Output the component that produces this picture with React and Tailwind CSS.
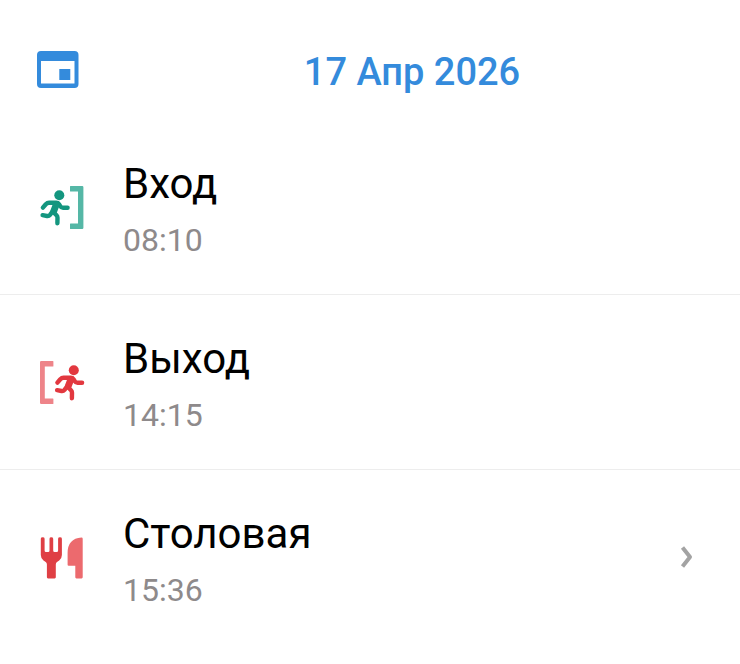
const Runner = ({ className }) => (
  <g className={className} fill="none" stroke="currentColor" strokeWidth="4.4" strokeLinecap="round" strokeLinejoin="round">
    <circle cx="21.3" cy="12.2" r="5" fill="currentColor" stroke="none" />
    <path d="M4.9 24.6 7.8 21.2Q9.2 19.8 11 19.8H18.3Q20.1 19.8 21 21.2L22.2 23.2Q23.2 24.8 25 24.8H29.6" />
    <path d="M18 22.2 15.8 28" strokeWidth="6.8" />
    <path d="M15.3 29 18.5 32.2Q19.5 33.2 19.5 34.8L19.4 40.2" />
    <path d="M14.5 28.5 12 31.8Q10.8 33.3 9 33L4.6 32.2" />
  </g>
);

const EnterIcon = () => (
  <svg viewBox="0 0 48 48" className="size-12 shrink-0" aria-hidden="true">
    <path className="fill-[#55b7a6]" d="M32.5 3H44.2Q45.4 3 45.4 4.2V44.8Q45.4 46 44.2 46H32.5Q32 46 32 45.5V41.1Q32 40.6 32.5 40.6H40V8.4H32.5Q32 8.4 32 7.9V3.5Q32 3 32.5 3Z" />
    <Runner className="text-[#14967f]" />
  </svg>
);

const ExitIcon = () => (
  <svg viewBox="0 0 48 48" className="size-12 shrink-0" aria-hidden="true">
    <path className="fill-[#ee8489]" d="M14.9 3H3.2Q2 3 2 4.2V44.8Q2 46 3.2 46H14.9Q15.4 46 15.4 45.5V41.1Q15.4 40.6 14.9 40.6H6.8V8.4H14.9Q15.4 8.4 15.4 7.9V3.5Q15.4 3 14.9 3Z" />
    <g transform="translate(14.5 0)">
      <Runner className="text-[#e2383f]" />
    </g>
  </svg>
);

const FoodIcon = () => (
  <svg viewBox="0 0 48 48" className="size-12 shrink-0" aria-hidden="true">
    <path className="fill-[#df3f44]" d="M2.8 5.7Q2.8 4.3 4.7 4.3T6.6 5.7V17.5Q6.6 19 8 19H10.1Q11.5 19 11.5 17.5V5.7Q11.5 4.3 13.3 4.3T15.2 5.7V17.5Q15.2 19 16.6 19H18.7Q20.1 19 20.1 17.5V5.7Q20.1 4.3 22 4.3T23.9 5.7V22Q23.9 25.5 21.2 27.4L19 29Q17.8 29.9 17.8 31.4V44.3Q17.8 45.4 16.7 45.4H10Q8.9 45.4 8.9 44.3V31.4Q8.9 29.9 7.7 29L5.5 27.4Q2.8 25.5 2.8 22Z" />
    <path className="fill-[#ec6a6e]" d="M43.5 4.5Q44.7 4.5 44.7 5.7V44.3Q44.7 45.4 43.6 45.4H38.4Q37.3 45.4 37.3 44.3V32.7H30.6Q29.6 32.7 29.6 31.7V20Q29.6 5.5 43.5 4.5Z" />
  </svg>
);

const events = [
  { title: "Вход", time: "08:10", Icon: EnterIcon },
  { title: "Выход", time: "14:15", Icon: ExitIcon },
  { title: "Столовая", time: "15:36", Icon: FoodIcon, hasDetails: true },
];

export default function App() {
  return (
    <main className="min-h-screen bg-white font-[Roboto,sans-serif]">
      {/* Date bar */}
      <header className="flex items-center gap-1 pt-12 pb-6 pl-9">
        <button type="button" aria-label="Календарь" className="shrink-0">
          <svg viewBox="0 0 44 44" className="size-11" aria-hidden="true">
            <path
              className="fill-[#348bdc]"
              fillRule="evenodd"
              d="M5 1H38.5Q42.5 1 42.5 5V34Q42.5 38 38.5 38H5Q1 38 1 34V5Q1 1 5 1ZM5 11V33.5H38.5V11ZM23.3 19H34.3V30H23.3Z"
            />
          </svg>
        </button>
        <h1 className="flex-1 text-center text-[38px] leading-12 font-medium text-[#348bdc]">17 Апр 2026</h1>
      </header>

      {/* Events of the day */}
      <ul className="divide-y divide-[#ededed]">
        {events.map(({ title, time, Icon, hasDetails }) => (
          <li key={title} className="flex items-center gap-[37px] py-8 pr-[39px] pl-[38px]">
            <Icon />
            <div className="flex-1">
              <h2 className="text-[42px] leading-16 text-black">{title}</h2>
              <p className="mt-0.5 text-[32px] leading-11 text-[#8e8a8b]">{time}</p>
            </div>
            {hasDetails && (
              <button type="button" aria-label="Подробнее">
                <svg viewBox="0 0 28 28" className="size-7" aria-hidden="true">
                  <path className="stroke-[#a3a3a3]" fill="none" strokeWidth="4" strokeLinejoin="round" d="M9.5 4.5 17 14 9.5 23.5" />
                </svg>
              </button>
            )}
          </li>
        ))}
      </ul>
    </main>
  );
}
